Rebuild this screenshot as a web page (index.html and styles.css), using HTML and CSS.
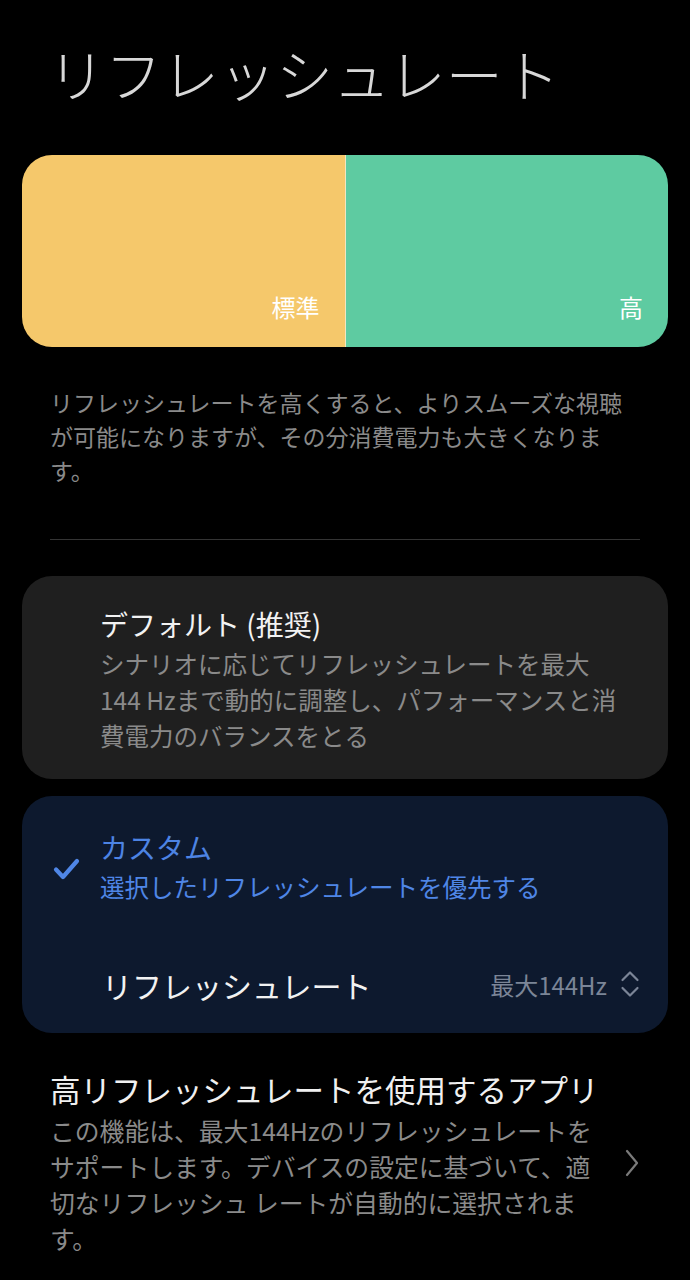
FILE: index.html
```html
<!DOCTYPE html>
<html lang="ja">
<head>
<meta charset="utf-8">
<title>リフレッシュレート</title>
<link rel="stylesheet" href="styles.css">
</head>
<body>
<div class="page">
  <h1 class="title">リフレッシュレート</h1>

  <div class="bar">
    <div class="half std"><span class="label">標準</span></div>
    <div class="split"></div>
    <div class="half high"><span class="label">高</span></div>
  </div>

  <p class="desc">リフレッシュレートを高くすると、よりスムーズな視聴が可能になりますが、その分消費電力も大きくなります。</p>

  <div class="divider"></div>

  <div class="card option">
    <div class="check-col"></div>
    <div class="text-col">
      <div class="opt-title">デフォルト (推奨)</div>
      <div class="opt-sub">シナリオに応じてリフレッシュレートを最大144 Hzまで動的に調整し、パフォーマンスと消費電力のバランスをとる</div>
    </div>
  </div>

  <div class="card option selected">
    <div class="sel-head">
      <div class="check-col">
        <svg class="check" width="27" height="23" viewBox="0 0 27 23"><polyline points="3,11.5 10,19 24,3" fill="none" stroke="#4f86e6" stroke-width="4.2" stroke-linecap="round" stroke-linejoin="round"/></svg>
      </div>
      <div class="text-col">
        <div class="opt-title blue">カスタム</div>
        <div class="opt-sub blue">選択したリフレッシュレートを優先する</div>
      </div>
    </div>
    <div class="rate-row">
      <span class="rate-label">リフレッシュレート</span>
      <span class="rate-value">最大144Hz</span>
      <svg class="updown" width="20" height="32" viewBox="0 0 20 32"><polyline points="2.5,11 10,3.5 17.5,11" fill="none" stroke="#7b8597" stroke-width="2.2" stroke-linecap="round" stroke-linejoin="round"/><polyline points="2.5,19 10,26.5 17.5,19" fill="none" stroke="#7b8597" stroke-width="2.2" stroke-linecap="round" stroke-linejoin="round"/></svg>
    </div>
  </div>

  <div class="apps">
    <div class="apps-text">
      <div class="apps-title">高リフレッシュレートを使用するアプリ</div>
      <div class="apps-sub">この機能は、最大144Hzのリフレッシュレートをサポートします。デバイスの設定に基づいて、適切なリフレッシュ レートが自動的に選択されます。</div>
    </div>
    <svg class="chev" width="16" height="28" viewBox="0 0 16 28"><polyline points="3,2 13,14 3,26" fill="none" stroke="#7a7a7a" stroke-width="2.2" stroke-linecap="round" stroke-linejoin="round"/></svg>
  </div>
</div>
</body>
</html>
```

FILE: styles.css
```css
html, body {
  margin: 0;
  padding: 0;
  background: #000;
}

body {
  font-family: "Noto Sans CJK JP", "Noto Sans", sans-serif;
  color: #f0f0f0;
}

.page {
  width: 690px;
  min-height: 1280px;
  box-sizing: border-box;
  padding-top: 35px;
}

.title {
  margin: 0;
  padding-left: 48px;
  font-size: 57px;
  line-height: 74px;
  font-weight: 300;
  color: #d8d8d8;
  letter-spacing: 0;
}

.bar {
  margin: 46px 22px 0;
  height: 192px;
  border-radius: 30px;
  overflow: hidden;
  display: flex;
}

.half {
  flex: 1;
  display: flex;
  align-items: flex-end;
  justify-content: flex-end;
  padding: 0 25px 25px 0;
}

.std { background: #f5c86b; }
.high { background: #5ecba1; }

.split {
  width: 1px;
  background: #f3e6c0;
}

.label {
  font-size: 24px;
  line-height: 30px;
  color: #ffffff;
}

.desc {
  margin: 38px 50px 0;
  font-size: 23px;
  line-height: 34px;
  color: #8a8a8a;
}

.divider {
  margin: 52px 50px 0;
  height: 1px;
  background: #343434;
}

.card {
  margin: 36px 22px 0;
  border-radius: 30px;
  background: #1f1f1f;
}

.option {
  display: flex;
  padding: 28px 43px 25px 0;
}

.check-col {
  width: 78px;
  flex: none;
  display: flex;
  align-items: center;
  justify-content: flex-end;
  padding-right: 20px;
  box-sizing: border-box;
}

.text-col {
  flex: 1;
}

.opt-title {
  font-size: 28px;
  line-height: 40px;
  color: #f2f2f2;
}

.opt-sub {
  margin-top: 2px;
  font-size: 24.5px;
  line-height: 36px;
  color: #8a8a8a;
}

.selected {
  margin-top: 17px;
  background: #0d192e;
  flex-direction: column;
  padding: 31px 28px 28px 0;
}

.sel-head {
  display: flex;
}

.sel-head .check-col {
  padding-top: 6px;
}

.blue {
  color: #4f86e6;
}

.opt-title.blue {
  color: #4d84e4;
}

.rate-row {
  margin-top: 60px;
  display: flex;
  align-items: center;
  padding-left: 80px;
}

.rate-label {
  flex: 1;
  font-size: 30px;
  line-height: 40px;
  color: #f2f2f2;
}

.rate-value {
  font-size: 24px;
  line-height: 30px;
  color: #7b8597;
  margin-right: 13px;
}

.updown {
  flex: none;
}

.apps {
  margin: 36px 0 0 50px;
  display: flex;
  align-items: center;
}

.apps-text {
  width: 552px;
  flex: none;
}

.apps-title {
  font-size: 30.5px;
  line-height: 40px;
  color: #f0f0f0;
  white-space: nowrap;
}

.apps-sub {
  margin-top: 3px;
  font-size: 24.8px;
  line-height: 36px;
  color: #8a8a8a;
}

.chev {
  margin-left: 22px;
  flex: none;
}
```
